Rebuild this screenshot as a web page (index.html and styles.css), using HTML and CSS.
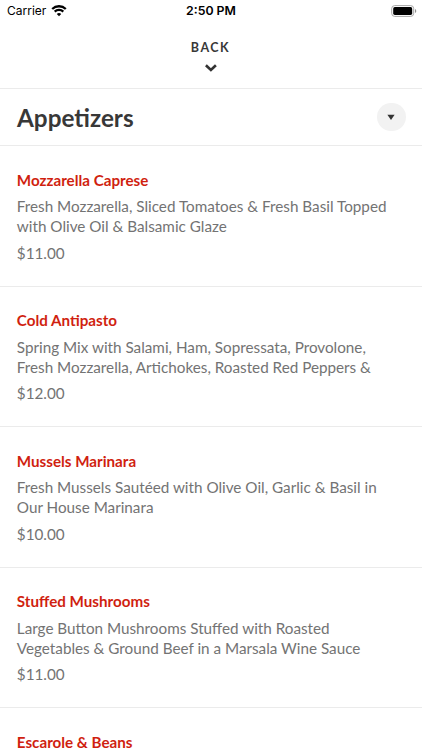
FILE: index.html
```html
<!DOCTYPE html>
<html lang="en">
<head>
  <meta charset="UTF-8">
  <meta name="viewport" content="width=device-width, initial-scale=1.0">
  <title>Appetizers</title>
  <link rel="stylesheet" href="styles.css">
</head>
<body>
  <div class="status_bar">
    <div class="carrier">
      <span>Carrier</span>
      <svg class="wifi" width="16" height="12" viewBox="0 0 16 12">
        <path d="M1.2 4a9.8 9.8 0 0 1 13.6 0" />
        <path d="M3.7 6.7a6.2 6.2 0 0 1 8.6 0" />
        <path class="dot" d="M8 11.2 5.8 9a3.2 3.2 0 0 1 4.4 0z" />
      </svg>
    </div>
    <div class="time">2:50 PM</div>
    <div class="battery_wrap">
      <svg width="26" height="12" viewBox="0 0 26 12">
        <rect x="0.7" y="0.6" width="22" height="10.8" rx="3" fill="none" stroke="#a6a6a6" />
        <rect x="2.2" y="2.1" width="19" height="7.8" rx="1.6" fill="#000" />
        <path d="M24 4v4a2.2 2.2 0 0 0 0-4z" fill="#8f8f8f" />
      </svg>
    </div>
  </div>
  <header class="back">
    <span>BACK</span>
    <svg width="12" height="8" viewBox="0 0 12 8">
      <path d="M.9 1.2 5.9 6l5-4.8" />
    </svg>
  </header>
  <div class="title_bar">
    <h1>Appetizers</h1>
    <button class="toggle" aria-label="Categories">
      <svg width="8" height="6" viewBox="0 0 8 6"><path d="M.4 .7h7.2L4 5.9z" /></svg>
    </button>
  </div>
  <ul class="menu">
    <li class="item">
      <h2>Mozzarella Caprese</h2>
      <p class="desc">Fresh Mozzarella, Sliced Tomatoes &amp; Fresh Basil Topped<br>with Olive Oil &amp; Balsamic Glaze</p>
      <p class="price">$11.00</p>
    </li>
    <li class="item">
      <h2>Cold Antipasto</h2>
      <p class="desc">Spring Mix with Salami, Ham, Sopressata, Provolone,<br>Fresh Mozzarella, Artichokes, Roasted Red Peppers &amp;</p>
      <p class="price">$12.00</p>
    </li>
    <li class="item">
      <h2>Mussels Marinara</h2>
      <p class="desc">Fresh Mussels Sautéed with Olive Oil, Garlic &amp; Basil in<br>Our House Marinara</p>
      <p class="price">$10.00</p>
    </li>
    <li class="item">
      <h2>Stuffed Mushrooms</h2>
      <p class="desc">Large Button Mushrooms Stuffed with Roasted<br>Vegetables &amp; Ground Beef in a Marsala Wine Sauce</p>
      <p class="price">$11.00</p>
    </li>
    <li class="item">
      <h2>Escarole &amp; Beans</h2>
    </li>
  </ul>
</body>
</html>
```
FILE: styles.css
```css
*{
  margin: 0;
  padding: 0;
  box-sizing: border-box;
}

html, body{
  height: 100%;
  overflow: hidden;
}

body{
  display: flex;
  flex-direction: column;
  background-color: #fff;
  font-family: Lato, sans-serif;
}

body > *{
  flex-shrink: 0;
}

.status_bar{
  display: grid;
  grid-template-columns: 1fr auto 1fr;
  align-items: center;
  height: 21px;
  padding: 0 5px 0 7px;
  font-family: Inter, sans-serif;
  font-size: 12px;
  color: #000;
}

.carrier{
  display: flex;
  align-items: center;
  gap: 5px;
}

.wifi path{
  fill: none;
  stroke: #000;
  stroke-width: 2.3;
}

.wifi .dot{
  fill: #000;
  stroke: none;
}

.time{
  margin-right: 2px;
  font-size: 12.3px;
  font-weight: 600;
}

.battery_wrap{
  display: flex;
  justify-content: flex-end;
}

.back{
  display: flex;
  flex-direction: column;
  align-items: center;
  height: 68px;
  padding: 19px 1px 0 0;
  border-bottom: 1px solid #ebebeb;
}

.back span{
  font-size: 12.5px;
  line-height: 16px;
  font-weight: 700;
  letter-spacing: 1.5px;
  color: #383838;
}

.back svg{
  margin-top: 7.5px;
  fill: none;
  stroke: #333;
  stroke-width: 2.6;
}

.title_bar{
  display: flex;
  justify-content: space-between;
  align-items: center;
  height: 57px;
  padding: 0 16.5px 0 17px;
  border-bottom: 1px solid #ebebeb;
}

.title_bar h1{
  font-size: 24.3px;
  font-weight: 700;
  color: #383838;
}

.toggle{
  display: flex;
  justify-content: center;
  align-items: center;
  width: 28.5px;
  height: 28.5px;
  border: 0;
  border-radius: 50%;
  background-color: #f2f2f2;
}

.toggle path{
  fill: #333;
}

.menu{
  flex: 1;
  min-height: 0;
  overflow: hidden;
  list-style: none;
}

.item{
  height: 140.5px;
  padding: 24.5px 16.8px 0;
  border-bottom: 1px solid #ebebeb;
}

.item:last-child{
  height: auto;
  padding-top: 25.5px;
  border-bottom: 0;
}

.item h2{
  font-size: 15.2px;
  line-height: 19px;
  font-weight: 700;
  color: #d01f10;
}

.item:last-child h2{
  line-height: 17px;
}

.desc, .price{
  font-size: 15.25px;
  line-height: 20.4px;
  color: #737373;
  white-space: nowrap;
}

.desc{
  margin-top: 6.5px;
}

.price{
  margin-top: 6px;
}
```
